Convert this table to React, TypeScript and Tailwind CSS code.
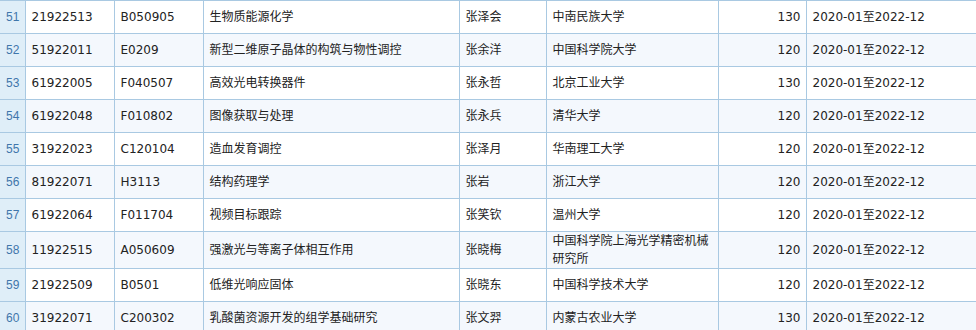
import React from 'react';

type Row = {
  no: number;
  id: string;
  code: string;
  title: string;
  name: string;
  org: string;
  amount: number;
  period: string;
};

const rows: Row[] = [
  { no: 51, id: '21922513', code: 'B050905', title: '生物质能源化学', name: '张泽会', org: '中南民族大学', amount: 130, period: '2020-01至2022-12' },
  { no: 52, id: '51922011', code: 'E0209', title: '新型二维原子晶体的构筑与物性调控', name: '张余洋', org: '中国科学院大学', amount: 120, period: '2020-01至2022-12' },
  { no: 53, id: '61922005', code: 'F040507', title: '高效光电转换器件', name: '张永哲', org: '北京工业大学', amount: 130, period: '2020-01至2022-12' },
  { no: 54, id: '61922048', code: 'F010802', title: '图像获取与处理', name: '张永兵', org: '清华大学', amount: 120, period: '2020-01至2022-12' },
  { no: 55, id: '31922023', code: 'C120104', title: '造血发育调控', name: '张泽月', org: '华南理工大学', amount: 120, period: '2020-01至2022-12' },
  { no: 56, id: '81922071', code: 'H3113', title: '结构药理学', name: '张岩', org: '浙江大学', amount: 120, period: '2020-01至2022-12' },
  { no: 57, id: '61922064', code: 'F011704', title: '视频目标跟踪', name: '张笑钦', org: '温州大学', amount: 120, period: '2020-01至2022-12' },
  { no: 58, id: '11922515', code: 'A050609', title: '强激光与等离子体相互作用', name: '张晓梅', org: '中国科学院上海光学精密机械研究所', amount: 120, period: '2020-01至2022-12' },
  { no: 59, id: '21922509', code: 'B0501', title: '低维光响应固体', name: '张晓东', org: '中国科学技术大学', amount: 120, period: '2020-01至2022-12' },
  { no: 60, id: '31922071', code: 'C200302', title: '乳酸菌资源开发的组学基础研究', name: '张文羿', org: '内蒙古农业大学', amount: 130, period: '2020-01至2022-12' },
];

const cell = 'border border-[#a9c9e2] px-[6px] py-0 h-[33px] align-middle';

export default function App() {
  return (
    <div className="w-[976px] h-[330px] overflow-hidden bg-white">
      <table
        className="table-fixed border-collapse w-[1000px] text-[12px] leading-[18px] text-[#222]"
        style={{ fontFamily: '"DejaVu Sans", "Noto Sans CJK SC", sans-serif' }}
      >
        <colgroup>
          <col className="w-[25px]" />
          <col className="w-[89px]" />
          <col className="w-[89px]" />
          <col className="w-[256px]" />
          <col className="w-[87px]" />
          <col className="w-[172px]" />
          <col className="w-[88px]" />
          <col className="w-[194px]" />
        </colgroup>
        <tbody>
          {rows.map((r, i) => (
            <tr key={r.no} className={i % 2 === 1 ? 'bg-[#f4f8fd]' : 'bg-white'}>
              <td
                className={`${cell} border-l-0 px-0 text-center bg-[#dfeef8] text-[#3f76ab] font-['Liberation_Sans','Noto_Sans_CJK_SC',sans-serif]`}
              >
                {r.no}
              </td>
              <td className={cell}>{r.id}</td>
              <td className={cell}>{r.code}</td>
              <td className={cell}>{r.title}</td>
              <td className={cell}>{r.name}</td>
              <td className={cell}>{r.org}</td>
              <td className={`${cell} text-right pr-[5px]`}>{r.amount}</td>
              <td className={`${cell} border-r-0`}>{r.period}</td>
            </tr>
          ))}
        </tbody>
      </table>
    </div>
  );
}
